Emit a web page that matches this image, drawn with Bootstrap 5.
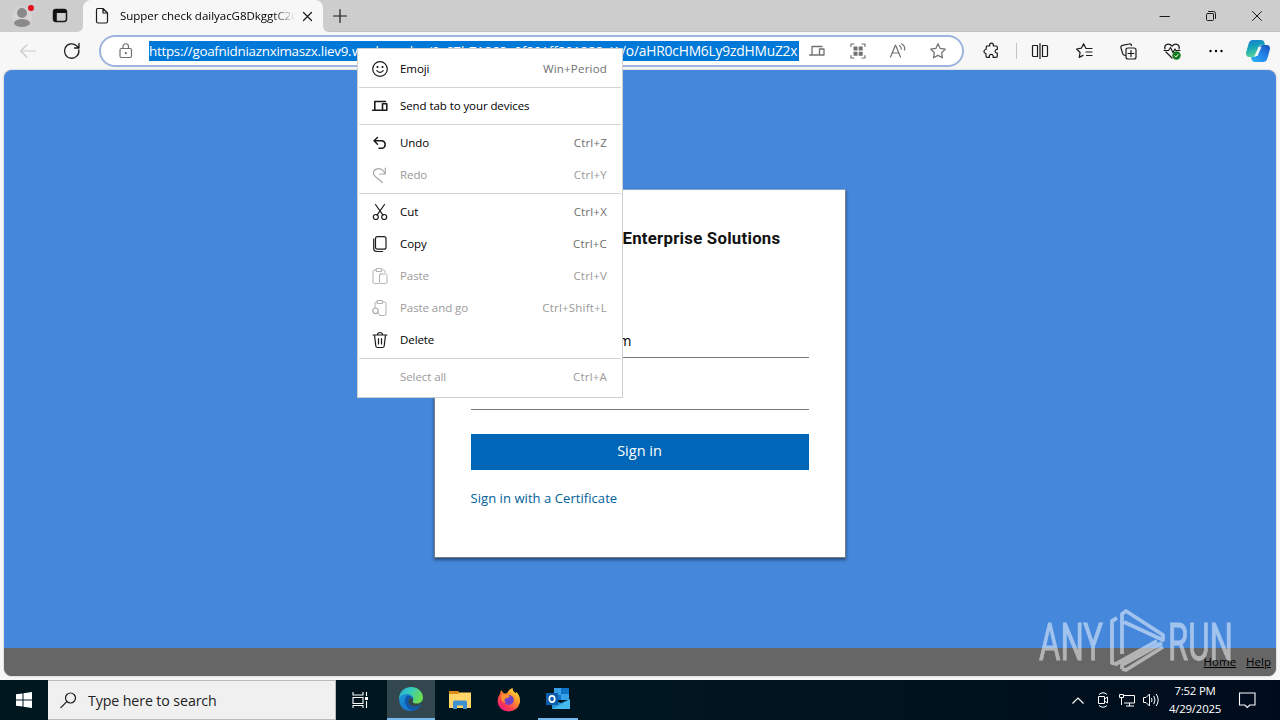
<!DOCTYPE html>
<html lang="en">
<head>
<meta charset="utf-8">
<title>Supper check</title>
<link href="https://cdn.jsdelivr.net/npm/bootstrap@5.3.0/dist/css/bootstrap.min.css" rel="stylesheet">
<style>
body{width:1280px;height:720px;overflow:hidden;background:#f7f7f8;font-family:"Open Sans","Noto Sans",sans-serif;font-size:12px;line-height:16px;color:#000}
svg{display:block;flex:none;overflow:visible}
.ic{fill:none;stroke:#1b1b1b;stroke-width:1.2;stroke-linecap:round;stroke-linejoin:round}
.tabstrip{height:32px;background:#cdcdcd}
.tableft{width:83px;height:32px;border-bottom-right-radius:6px;background:#cdcdcd;padding-left:12px}
.tabbed{background:#f7f7f7}
.tab-item{width:240px;height:32px;padding-left:12px;background:#f7f7f7;border-radius:8px 8px 0 0}
.tab-title{width:175px;margin-left:11px;white-space:nowrap;overflow:hidden;font-size:11.5px;letter-spacing:-.02px;-webkit-mask-image:linear-gradient(90deg,#000 152px,transparent 175px)}
.tabright{border-bottom-left-radius:6px;background:#cdcdcd;padding:0 18px 0 10px;border-bottom:1px solid #c2c2c2}
.toolbar{height:38px}
.address{width:865px;height:32px;border:2px solid #9db4dc;border-radius:16px;background:#fff;margin-left:19px;padding-left:17px}
.url{width:650px;height:20px;background:#0078d7;color:#fff;margin-left:15px;font-size:13.4px;line-height:20px;white-space:nowrap}
.url span{overflow:hidden;flex:none}
.u1{width:203px;letter-spacing:-.28px}.u2{width:269px;letter-spacing:-.1px}.u3{width:178px;font-size:13.8px;letter-spacing:-.2px}
.gray .ic,.ic.gray{stroke:#707070}
.viewport{margin:0 4px;height:606px;background:#4587db;border-radius:8px;overflow:hidden;box-shadow:0 0 2px #aaa}
.login{width:412px;height:369px;margin:119px 1px 0 0;background:#fff;border-radius:0;border:1px solid #747c88;border-top-color:#8aa6cc;box-shadow:0 2px 3px rgba(0,0,0,.45);padding:0 36px}
.brand-title{margin:37px 0 0 152px;font:bold 16.8px/22px "Roboto",sans-serif;color:#111;white-space:nowrap;letter-spacing:.25px}
.field{border-bottom:1px solid #777}
.f1{height:109px;padding:82px 0 0 148px;font-size:14px;line-height:20px}
.f2{height:52px}
.signin{height:36px;margin-top:24px;background:#0067b8;color:#fff;border-radius:0;border:0;font-size:14.5px;padding:0 0 2px}
.cert{margin-top:18px;font-size:13px;line-height:20px;color:#00609a;text-decoration:none;letter-spacing:.06px}
.foot{height:28px;background:#666;padding:0 5px 0 0;gap:10px;font-size:11.5px}
.foot a{color:#000}
.cmenu{left:357px;top:48px;width:266px;height:350px;background:#fff;border:1px solid #cfcfcf;padding:4px 1px;font-size:11.5px;letter-spacing:-.08px;z-index:5}
.mi{height:32px;padding:0 14px 0 13px}
.mi svg{margin-right:12px}
.mi .key{margin-left:auto;color:#707070;letter-spacing:.2px}
.mi.off,.mi.off .key{color:#9a9a9a}
.mi.off .ic{stroke:#a8a8a8}
.sep{height:1px;background:#d4d4d4;margin:2px 0}
.taskbar{height:40px;margin-top:4px;background:linear-gradient(90deg,#00171f,#001520 60%,#000c1c)}
.search{width:288px;background:#f0f0f0;border:1px solid #b9b9b9;border-left:0;padding:2px 0 0 12px;font-size:14.2px;letter-spacing:-.1px;color:#222}
.tb{width:48px;height:40px}
.tb.act{background:#33474f;border-bottom:2px solid #76b9ed}
.tb.run{width:40px;border-bottom:2px solid #76b9ed;margin:0 6px 0 5px}
.clock{color:#fff;font-size:11.4px;line-height:18px;width:60px;letter-spacing:-.2px}
.wm{left:1034px;top:606px;z-index:4}
</style>
</head>
<body class="d-flex flex-column position-relative">
<header class="tabstrip d-flex">
  <div class="tabbed"><div class="tableft d-flex align-items-center">
    <svg width="24" height="24"><circle cx="10" cy="13" r="10" fill="#d8d4d4"/><circle cx="10" cy="9" r="5" fill="#8a8a8a"/><ellipse cx="10" cy="19" rx="8" ry="4" fill="#8a8a8a"/><circle cx="19" cy="4" r="3" fill="#e00b1c"/></svg>
    <svg class="ms-3" width="16" height="16"><rect class="ic" x="1.5" y="1.5" width="13" height="12" rx="2.4" style="stroke-width:1.5"/><path d="M1.500 5V3.500q0-2 2-2h9q2 0 2 2V5zM1.500 5h3.300v8.500h-2q-1.300 0-1.300-2z" fill="#111"/></svg>
  </div></div>
  <div class="tab-item d-flex align-items-center">
    <svg width="14" height="18"><path class="ic" d="M2.500 1.500h5.500l4.500 4.500v8.500q0 1.500-1.500 1.500h-8q-1.500 0-1.500-1.500v-11.500q0-1.500 1-1.500zM8 1.500v4.500h4.500"/></svg>
    <div class="tab-title">Supper check dailyacG8DkggtC2G</div>
    <svg class="ms-2" width="9" height="9"><path class="ic" d="M.5.5l8 8M8.500.5l-8 8"/></svg>
  </div>
  <div class="tabbed flex-grow-1 d-flex"><div class="tabright flex-grow-1 d-flex align-items-center">
    <svg width="14" height="14"><path class="ic" d="M7 .5v13M.5 7h13"/></svg>
    <svg class="ms-auto" width="10" height="10"><path class="ic" d="M0 5.500h9.500" style="stroke-width:1"/></svg>
    <svg style="margin:0 36px" width="10" height="10"><path class="ic" d="M2.500.5h5q2 0 2 2v5M1.500 2.500h5.500v0q.5 0 .5.5v5.500q0 1-1 1h-5q-1 0-1-1v-5q0-1 1-1z" style="stroke-width:1"/></svg>
    <svg width="10" height="10"><path class="ic" d="M.5.500l9 9M9.500.500l-9 9" style="stroke-width:1"/></svg>
  </div></div>
</header>
<nav class="toolbar d-flex align-items-center" style="padding-left:20px">
  <svg width="16" height="14"><path class="ic" d="M15.500 7h-15M7 .8L.6 7 7 13.200" style="stroke:#c9c9c9"/></svg>
  <svg style="margin-left:28px" width="16" height="16"><path class="ic" d="M14.800 7a7.200 7.200 0 1 1-2.300-4.300l2.300 2M15 .5v4.500h-4.400" style="stroke-width:1.3"/></svg>
  <div class="address d-flex align-items-center gray">
    <svg width="16" height="16"><path class="ic" d="M3.500 5.500h8.500q1.500 0 1.500 1.500v6q0 1.500-1.500 1.500h-8.500q-1.500 0-1.500-1.500v-6q0-1.500 1.500-1.500zM5 5.500V3.500a2.700 2.700 0 0 1 5.500 0v2"/><circle cx="7.800" cy="10" r="1" fill="#555"/></svg>
    <div class="url d-flex"><span class="u1">https://goafnidniaznximaszx.liev9.</span><span class="u2">workers.dev/0c67b71868e0f801ff801888eW</span><span class="u3">/o/aHR0cHM6Ly9zdHMuZ2x</span></div>
    <svg style="margin-left:10px" width="16" height="16"><path class="ic" d="M13 3.500H3v8M.6 12h8.800M10.500 6h4.500v6h-4.500z" style="stroke-width:1.300"/></svg>
    <svg style="margin-left:25px" width="16" height="16"><path class="ic" d="M1 3.500V1h3M12 1h3v2.500M15 12.500V15h-3M4 15H1v-2.500"/><path fill="#707070" d="M3.500 3.500h4v4h-4zM8.700 3.500h4v4h-4zM3.500 8.700h4v4h-4zM8.700 8.700h4v4h-4z"/></svg>
    <svg style="margin-left:24px" width="16" height="16"><path class="ic" d="M.5 14L5.500 2l5 12M2.200 10h6.600M9.500 2.500q2 1 1.800 3.700M11.500.8q3.700 1.800 3.200 6.200"/></svg>
    <svg style="margin-left:24px" width="16" height="16"><path class="ic" d="M8 .7l2.200 4.700 5.100.7-3.700 3.600.9 5.100L8 12.400l-4.500 2.400.9-5.100L.7 6.100l5.100-.7z"/></svg>
  </div>
  <svg style="margin-left:19px" width="16" height="16"><path class="ic" d="M3.500 3h3.200a2 2 0 1 1 3.600 0h3.200q.8 0 .8 1v2.500h-.8a1.800 1.800 0 0 0 0 3.500h.8v3q0 1.300-1.300 1.300H10a2 2 0 1 0-3.500 0H4q-1 0-1-1V10.500a2 2 0 1 1 0-4z"/></svg>
  <svg style="margin-left:17px" width="2" height="16"><path d="M.5 0v16" stroke="#c4c4c4"/></svg>
  <svg style="margin-left:14px" width="16" height="16"><path class="ic" d="M5.500 2.500h-4q-1 0-1 1v9q0 1 1 1h4zM10.500 2.500h4q1 0 1 1v9q0 1-1 1h-4zM8 .5v15"/></svg>
  <svg style="margin-left:28px" width="17" height="16"><path class="ic" d="M16 5.500h-4.500L10 5.400 7.600.7 5.400 5.200.6 6l3.500 3.500-.9 4.900 3.800-2M10 9h6M10.500 12.500H16"/></svg>
  <svg style="margin-left:27px" width="17" height="17"><path class="ic" d="M5.500 12.500Q3 12.500 2.500 10L1 5q-.5-2 1.500-2.700L9 1q2-.5 2.500 1.500M8 5h6q2 0 2 2v7q0 2-2 2H8q-2 0-2-2V7q0-2 2-2M11 7.500v6M8 10.500h6"/></svg>
  <svg style="margin-left:27px" width="18" height="17"><path class="ic" d="M1 6Q0 3.500 2.200 1.800 5 0 8 3q3-3 5.800-1.200Q16 3.500 15 6M2 9l6 6M0 7.500h4.500l2-3 2.500 5 2-3.500 1 1.500h4"/><circle cx="12.500" cy="12.500" r="4.200" fill="#117a1e"/><path d="M10.500 12.700l1.400 1.300 2.500-2.800" fill="none" stroke="#fff"/></svg>
  <svg style="margin-left:27px" width="14" height="4"><circle cx="1.500" cy="2" r="1.200"/><circle cx="7" cy="2" r="1.200"/><circle cx="12.500" cy="2" r="1.200"/></svg>
  <svg style="margin-left:22px" width="26" height="24" viewBox="0 0 26 24"><defs><linearGradient id="ca" x2=".3" y2="1"><stop stop-color="#1578d4"/><stop offset=".5" stop-color="#16a6b8"/><stop offset="1" stop-color="#5ad39a"/></linearGradient><linearGradient id="cb" x1="1" x2="0" y2="1"><stop stop-color="#1552bb"/><stop offset=".5" stop-color="#2684e8"/><stop offset="1" stop-color="#29b8f4"/></linearGradient></defs><path d="M8 1h8q3 0 3.500 3l.5 2h-3q-2.500 0-3.500 3l-1.500 5q-1 4-4 4H4q-3 0-3-4L3.500 5Q4.500 1 8 1z" fill="url(#ca)"/><path d="M18 23h-8q-3 0-3.500-3L6 18h3q2.500 0 3.500-3L14 10q1-4 4-4h4q3 0 3 4l-2.500 9q-1 4-4.500 4z" fill="url(#cb)"/><path d="M13.500 8h3L12.500 17h-3z" fill="#fff" opacity=".9"/></svg>
</nav>
<main class="viewport d-flex flex-column align-items-center">
  <section class="card login">
    <div class="brand-title">Enterprise Solutions</div>
    <div class="field f1">m</div>
    <div class="field f2"></div>
    <button class="btn signin">Sign in</button>
    <a class="cert" href="#">Sign in with a Certificate</a>
  </section>
  <footer class="foot mt-auto w-100 d-flex justify-content-end align-items-center"><a href="#">Home</a><a href="#">Help</a></footer>
</main>
<footer class="taskbar d-flex">
  <div class="tb d-flex align-items-center justify-content-center"><svg width="16" height="16"><path fill="#fff" d="M0 2.300l6.500-.9v6.100H0zM7.500 1.200L16 0v7.500H7.500zM0 8.500h6.500v6.100L0 13.700zM7.500 8.500H16V16l-8.500-1.200z"/></svg></div>
  <div class="search d-flex align-items-center"><svg width="17" height="17" style="margin-right:11px"><circle class="ic" cx="10.500" cy="5" r="5"/><path class="ic" d="M6.800 8.700L.8 14.700"/></svg>Type here to search</div>
  <div class="tb d-flex align-items-center justify-content-center"><svg width="17" height="16"><path d="M1 0v3h10V0M1 5.500h10v6H1zM1 16v-2.500h10V16M14.500 0v4M14.500 9v7" fill="none" stroke="#fff" stroke-width="1.100"/><path fill="#fff" d="M13 5h3v3h-3z"/></svg></div>
  <div class="tb act d-flex align-items-center justify-content-center" style="margin-left:3px"><svg width="24" height="24" viewBox="0 0 24 24"><defs><linearGradient id="ea" x2="1" y2=".4"><stop stop-color="#26a8df"/><stop offset=".5" stop-color="#36cbb9"/><stop offset="1" stop-color="#6bdc55"/></linearGradient><linearGradient id="eb" y2="1"><stop stop-color="#1b96d2"/><stop offset="1" stop-color="#1268cf"/></linearGradient></defs><path d="M0 12C0 5 5 0 12 0s12 5 12 10.500c0 4-3 6-6.500 6-3 0-4.500-1.300-3.300-3C15 9 10 7 6 8Q2 8.500 0 12z" fill="url(#ea)"/><path d="M0 12q2-5 8-5 6 .5 6.500 5Q12 9.500 9.700 12 7 17 13 19.500q4.500 1.500 9-2Q18.500 24 12 24 1 24 0 12z" fill="url(#eb)"/><path d="M8 8.500Q4 13 7 18.500 9.500 23.500 15 23.600 20 22 22 17.500 18 20.500 13 19.500 7 17 9.700 12q1.500-2 3.300-1.600Q11.500 8 8 8.500z" fill="#1158a8"/></svg></div>
  <div class="tb d-flex align-items-center justify-content-center" style="margin-left:1px"><svg width="22" height="20"><path fill="#d98c17" d="M0 1h9l2 2h11v5H0z"/><path fill="#ffd667" d="M0 4h9l2-1.500h11V18H0z"/><path fill="#3e91ce" d="M4 19v-7q0-1.500 1.500-1.500h11q1.500 0 1.500 1.500v7h-4v-3.500H8V19z"/></svg></div>
  <div class="tb d-flex align-items-center justify-content-center" style="margin-left:1px"><svg width="24" height="24"><defs><linearGradient id="fa" x1="1" x2=".2" y2="1"><stop stop-color="#fff44f"/><stop offset=".4" stop-color="#ff9a28"/><stop offset=".75" stop-color="#ff3c50"/><stop offset="1" stop-color="#e31587"/></linearGradient></defs><path fill="url(#fa)" d="M3 6L4 2l3 3.500 3-.3Q12 1 15.500 0q0 3 3 5l1-1q4.500 5 3.300 11-2.300 8-11 8.500Q2 23 .6 14 .2 9.500 3 6z"/><circle cx="11.800" cy="12" r="5" fill="#7340c8"/><path fill="#ff9330" d="M5 7q4-1.500 8 1-2 2.500-5 2.500-1.500 3 1.500 4.500-5-.5-5.500-5z"/></svg></div>
  <div class="tb run d-flex align-items-center justify-content-center"><svg width="25" height="22"><path fill="#1173c7" d="M8 0h15v12H8z"/><path fill="#35a0e8" d="M8 0h7v7H8zM15 6h8v6h-8z"/><path fill="#2095dc" d="M6 12l9 3 9-4v10H6z"/><path fill="#45b8ec" d="M6 21l18-9.500V21z"/><path fill="#0a5cad" d="M0 5h12v12H0z"/><ellipse cx="6" cy="11" rx="2.700" ry="3.200" fill="none" stroke="#fff" stroke-width="1.700"/></svg></div>
  <div class="ms-auto d-flex align-items-center">
    <svg width="12" height="7"><path d="M.5 6.500L6 1l5.500 5.500" fill="none" stroke="#fff" stroke-width="1.200"/></svg>
    <svg style="margin-left:13px" width="13" height="16"><path d="M2 2.500q4-3.500 8 0M2 13.500q4 3.500 8 0M1.500 4.500h6v7h-6zM7.500 7l3-2v6l-3-2" fill="none" stroke="#fff"/></svg>
    <svg style="margin-left:9px" width="17" height="14"><path d="M5 2.500h10.500v7.500H5M2.500 5v7M.5 1.500h4v3h-4zM7 13h8M10.500 10v3" fill="none" stroke="#fff"/></svg>
    <svg style="margin-left:7px" width="17" height="14"><path d="M.5 4.500h2.500L6.500 1v12L3 9.500H.5zM8.500 5q1 2 0 4M10.800 3q2.400 4 0 8M13.200 1q4 6 0 12" fill="none" stroke="#fff"/></svg>
    <div class="clock text-center" style="margin-left:5px">7:52 PM<br>4/29/2025</div>
    <svg style="margin:0 24px 0 14px" width="17" height="17"><path d="M.5 1h15.500v12h-5.200L8.300 15.500 5.800 13H.5z" fill="none" stroke="#fff" stroke-width="1.100"/></svg>
  </div>
</footer>

<svg class="wm position-absolute" width="204" height="70">
  <g fill="#fff" stroke="#fff" stroke-width=".9" opacity=".5" font-family="Roboto,sans-serif" font-size="51"><text x="5" y="54" textLength="64" lengthAdjust="spacingAndGlyphs">ANY</text><text x="134" y="54" textLength="65" lengthAdjust="spacingAndGlyphs">RUN</text></g>
  <g fill="none" stroke="#fff" opacity=".5" stroke-width="3.800" stroke-linejoin="round"><path d="M83 12l-5 3v42l4 1 41-23M88 48V8l4-3 37 24v5L90 16M88 63v-4l40-22M88 63l4 1 37-23"/></g>
</svg>

<div class="cmenu position-absolute">
  <div class="mi d-flex align-items-center"><svg width="16" height="16"><circle class="ic" cx="8" cy="8" r="7.300"/><path class="ic" d="M4.800 9.700q3.200 3.400 6.400 0"/><circle cx="5.500" cy="6" r="1"/><circle cx="10.500" cy="6" r="1"/></svg>Emoji<span class="key">Win+Period</span></div>
  <div class="sep"></div>
  <div class="mi d-flex align-items-center"><svg width="16" height="16"><path class="ic" d="M13.500 3.500H2.800v8M.6 12.200h8.700M10.500 5.700h4.300v6.500h-4.300z" style="stroke-width:1.600"/></svg>Send tab to your devices</div>
  <div class="sep"></div>
  <div class="mi d-flex align-items-center"><svg width="16" height="16"><path class="ic" d="M5.500 2.500L2 5.800l3.500 3.400M2 5.800h8a3.800 3.800 0 0 1 0 7.500H7" style="stroke-width:1.500"/></svg>Undo<span class="key">Ctrl+Z</span></div>
  <div class="mi off d-flex align-items-center"><svg width="16" height="16"><path class="ic" d="M13.300 1v6H7.500M13 6.500Q10 1 5.300 1.800 1 3 1.500 6.500q.5 2 2 3.300L10.500 15.500"/></svg>Redo<span class="key">Ctrl+Y</span></div>
  <div class="sep"></div>
  <div class="mi d-flex align-items-center"><svg width="16" height="16"><path class="ic" d="M3.500.5l7.500 10.700M12.500.5L5 11.200"/><circle class="ic" cx="3.800" cy="13" r="2.500"/><circle class="ic" cx="12.200" cy="13" r="2.500"/></svg>Cut<span class="key">Ctrl+X</span></div>
  <div class="mi d-flex align-items-center"><svg width="16" height="16"><path class="ic" d="M5.500.7h6.500q2 0 2 2v8.500q0 2-2 2H5.500q-2 0-2-2V2.700q0-2 2-2zM1.700 3v9.500q0 3 3 3h6"/></svg>Copy<span class="key">Ctrl+C</span></div>
  <div class="mi off d-flex align-items-center"><svg width="16" height="16"><path class="ic" d="M4.500 2h-2Q1 2 1 3.500v10.700Q1 15.500 2.500 15.500h4M9.500 2h2Q13 2 13 3.500v1M4.500.5h5v3h-5zM8.500 6h5q1.500 0 1.500 1.500v6.500q0 1.500-1.500 1.500h-5Q7.500 15.500 7.500 14V7q0-1 1-1z" style="stroke-width:.9"/></svg>Paste<span class="key">Ctrl+V</span></div>
  <div class="mi off d-flex align-items-center"><svg width="16" height="16"><path class="ic" d="M5.500 2H4Q3 2 3 3.500v4M10.500 2h2q1.500 0 1.500 1.500v10.500q0 1.500-1.500 1.500H8M5.500.5h5v3h-5zM5.500 12.500l3 3" style="stroke-width:.9"/><circle class="ic" cx="3.500" cy="10.800" r="2.800"/></svg>Paste and go<span class="key">Ctrl+Shift+L</span></div>
  <div class="mi d-flex align-items-center"><svg width="16" height="16"><path class="ic" d="M1 3h14M5.500 3Q5.500.5 8 .5t2.500 2.500M2.500 3l1.300 11q.2 1.500 1.700 1.500h5q1.500 0 1.700-1.500L13.500 3M6.500 6.500v5.500M9.500 6.500v5.500"/></svg>Delete</div>
  <div class="sep"></div>
  <div class="mi off d-flex align-items-center"><svg width="16" height="16"></svg>Select all<span class="key">Ctrl+A</span></div>
</div>
<script src="https://cdn.jsdelivr.net/npm/bootstrap@5.3.0/dist/js/bootstrap.bundle.min.js"></script>
</body>
</html>
